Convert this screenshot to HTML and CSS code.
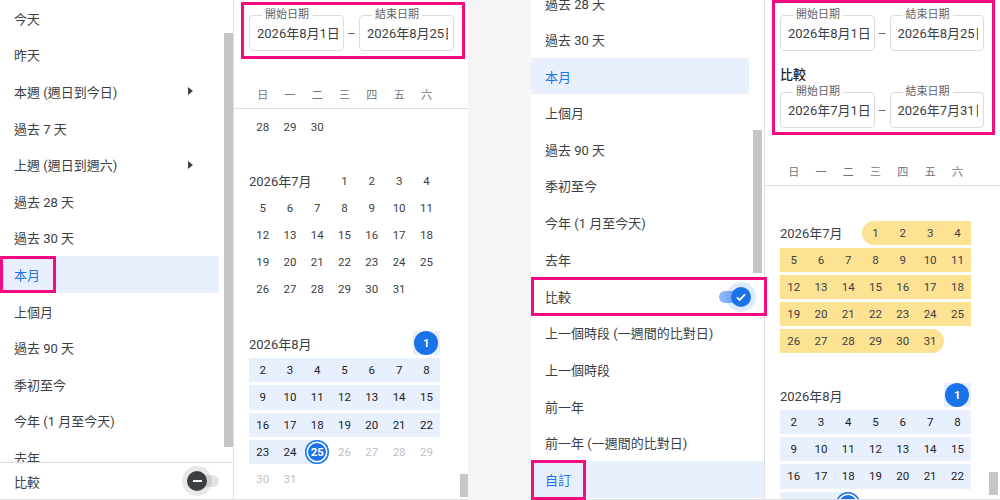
FILE: index.html
```html
<!DOCTYPE html>
<html lang="zh-Hant">
<head>
    <meta charset="UTF-8">
    <meta name="viewport" content="width=device-width, initial-scale=1.0">
    <title>日期範圍</title>
    <link rel="stylesheet" href="styles.css">
</head>
<body>
    <!-- picker without comparison -->
    <div class="shot">
        <div class="menu">
            <div class="menu-scroll">
                <ul class="presets">
                    <li>今天</li>
                    <li>昨天</li>
                    <li>本週 (週日到今日)<i class="caret"></i></li>
                    <li>過去 7 天</li>
                    <li>上週 (週日到週六)<i class="caret"></i></li>
                    <li>過去 28 天</li>
                    <li>過去 30 天</li>
                    <li class="active"><span class="mark mark-item"></span>本月</li>
                    <li>上個月</li>
                    <li>過去 90 天</li>
                    <li>季初至今</li>
                    <li>今年 (1 月至今天)</li>
                    <li>去年</li>
                </ul>
                <div class="vbar"><div class="thumb"></div></div>
            </div>
            <div class="compare-row">比較
                <span class="switch"><span class="track"></span><span class="knob"><i class="minus"></i></span></span>
            </div>
        </div>
        <div class="cal">
            <div class="range">
                <div class="fields">
                    <div class="field"><span class="lbl">開始日期</span><span class="val">2026年8月1日</span></div>
                    <span class="dash">–</span>
                    <div class="field"><span class="lbl">結束日期</span><span class="val">2026年8月25日</span></div>
                </div>
            </div>
            <div class="dow"><span>日</span><span>一</span><span>二</span><span>三</span><span>四</span><span>五</span><span>六</span></div>
            <div class="cal-body">
                <div class="months">
                    <div class="wk"><span>28</span><span>29</span><span>30</span></div>
                    <div class="wk"></div>
                    <div class="wk"><span class="mlabel c3">2026年7月</span><span>1</span><span>2</span><span>3</span><span>4</span></div>
                    <div class="wk"><span>5</span><span>6</span><span>7</span><span>8</span><span>9</span><span>10</span><span>11</span></div>
                    <div class="wk"><span>12</span><span>13</span><span>14</span><span>15</span><span>16</span><span>17</span><span>18</span></div>
                    <div class="wk"><span>19</span><span>20</span><span>21</span><span>22</span><span>23</span><span>24</span><span>25</span></div>
                    <div class="wk"><span>26</span><span>27</span><span>28</span><span>29</span><span>30</span><span>31</span></div>
                    <div class="wk"></div>
                    <div class="wk"><span class="mlabel c6">2026年8月</span><span class="sel"><b class="dot">1</b></span></div>
                    <div class="wk"><span class="sel">2</span><span class="sel">3</span><span class="sel">4</span><span class="sel">5</span><span class="sel">6</span><span class="sel">7</span><span class="sel">8</span></div>
                    <div class="wk"><span class="sel">9</span><span class="sel">10</span><span class="sel">11</span><span class="sel">12</span><span class="sel">13</span><span class="sel">14</span><span class="sel">15</span></div>
                    <div class="wk"><span class="sel">16</span><span class="sel">17</span><span class="sel">18</span><span class="sel">19</span><span class="sel">20</span><span class="sel">21</span><span class="sel">22</span></div>
                    <div class="wk"><span class="sel">23</span><span class="sel">24</span><span class="sel-end"><b class="dot ring">25</b></span><span class="off">26</span><span class="off">27</span><span class="off">28</span><span class="off">29</span></div>
                    <div class="wk"><span class="off">30</span><span class="off">31</span></div>
                </div>
                <div class="vbar"><div class="thumb"></div></div>
            </div>
        </div>
    </div>

    <!-- picker with comparison turned on -->
    <div class="shot shot-cmp">
        <div class="menu">
            <div class="menu-scroll">
                <ul class="presets">
                    <li>過去 28 天</li>
                    <li>過去 30 天</li>
                    <li class="active">本月</li>
                    <li>上個月</li>
                    <li>過去 90 天</li>
                    <li>季初至今</li>
                    <li>今年 (1 月至今天)</li>
                    <li>去年</li>
                </ul>
                <div class="vbar"><div class="thumb"></div></div>
            </div>
            <div class="compare-row"><span class="mark mark-row"></span>比較
                <span class="switch on"><span class="track"></span><span class="knob">
                    <svg width="12" height="12" viewBox="0 0 12 12"><path d="M2 6.3l2.6 2.6L10 3.4" fill="none" stroke="#fff" stroke-width="1.8"/></svg>
                </span></span>
            </div>
            <ul class="options">
                <li>上一個時段 (一週間的比對日)</li>
                <li>上一個時段</li>
                <li>前一年</li>
                <li>前一年 (一週間的比對日)</li>
                <li class="active"><span class="mark mark-item"></span>自訂</li>
            </ul>
        </div>
        <div class="cal">
            <div class="range">
                <div class="fields">
                    <div class="field"><span class="lbl">開始日期</span><span class="val">2026年8月1日</span></div>
                    <span class="dash">–</span>
                    <div class="field"><span class="lbl">結束日期</span><span class="val">2026年8月25日</span></div>
                </div>
                <div class="cmp-label">比較</div>
                <div class="fields">
                    <div class="field"><span class="lbl">開始日期</span><span class="val">2026年7月1日</span></div>
                    <span class="dash">–</span>
                    <div class="field"><span class="lbl">結束日期</span><span class="val">2026年7月31日</span></div>
                </div>
            </div>
            <div class="dow"><span>日</span><span>一</span><span>二</span><span>三</span><span>四</span><span>五</span><span>六</span></div>
            <div class="cal-body">
                <div class="months">
                    <div class="wk"></div>
                    <div class="wk"><span class="mlabel c3">2026年7月</span><span class="cmp cmp-first">1</span><span class="cmp">2</span><span class="cmp">3</span><span class="cmp">4</span></div>
                    <div class="wk"><span class="cmp">5</span><span class="cmp">6</span><span class="cmp">7</span><span class="cmp">8</span><span class="cmp">9</span><span class="cmp">10</span><span class="cmp">11</span></div>
                    <div class="wk"><span class="cmp">12</span><span class="cmp">13</span><span class="cmp">14</span><span class="cmp">15</span><span class="cmp">16</span><span class="cmp">17</span><span class="cmp">18</span></div>
                    <div class="wk"><span class="cmp">19</span><span class="cmp">20</span><span class="cmp">21</span><span class="cmp">22</span><span class="cmp">23</span><span class="cmp">24</span><span class="cmp">25</span></div>
                    <div class="wk"><span class="cmp">26</span><span class="cmp">27</span><span class="cmp">28</span><span class="cmp">29</span><span class="cmp">30</span><span class="cmp cmp-last">31</span></div>
                    <div class="wk"></div>
                    <div class="wk"><span class="mlabel c6">2026年8月</span><span class="sel"><b class="dot">1</b></span></div>
                    <div class="wk"><span class="sel">2</span><span class="sel">3</span><span class="sel">4</span><span class="sel">5</span><span class="sel">6</span><span class="sel">7</span><span class="sel">8</span></div>
                    <div class="wk"><span class="sel">9</span><span class="sel">10</span><span class="sel">11</span><span class="sel">12</span><span class="sel">13</span><span class="sel">14</span><span class="sel">15</span></div>
                    <div class="wk"><span class="sel">16</span><span class="sel">17</span><span class="sel">18</span><span class="sel">19</span><span class="sel">20</span><span class="sel">21</span><span class="sel">22</span></div>
                    <div class="wk"><span class="sel">23</span><span class="sel">24</span><span class="sel-end"><b class="dot ring">25</b></span><span class="off">26</span><span class="off">27</span><span class="off">28</span><span class="off">29</span></div>
                </div>
                <div class="vbar"><div class="thumb"></div></div>
            </div>
        </div>
    </div>
</body>
</html>
```

FILE: styles.css
```css
* { box-sizing: border-box; }
body { margin: 0; height: 500px; overflow: hidden; display: flex; background: #f5f5f5; font-family: Roboto, "Noto Sans CJK TC", sans-serif; color: #3c4043; }
.shot { width: 468px; height: 500px; flex: none; display: flex; background: #fff; border-bottom: 1px solid #e0e0e0; }
.shot-cmp { width: 469px; margin-left: 63px; }

/* preset menu */
.menu { width: 234px; flex: none; display: flex; flex-direction: column; border-right: 1px solid #e0e0e0; font-size: 13px; }
.menu-scroll { flex: 1; min-height: 0; display: flex; overflow: hidden; }
.presets, .options { list-style: none; margin: 0; padding: 0; }
.presets { width: 219px; flex: none; }
.presets li, .options li { position: relative; height: 36.6px; display: flex; align-items: center; justify-content: space-between; padding: 0 26px 0 14px; white-space: nowrap; }
.active { background: #e8f0fe; color: #1a73e8; }
.caret { border-left: 5px solid #3c4043; border-top: 4px solid transparent; border-bottom: 4px solid transparent; }
.menu .vbar { width: 9px; margin-left: 5px; flex: none; }
.menu .thumb { background: #c6c6c6; margin-top: 33px; height: 414px; }
.compare-row { position: relative; flex: none; height: 37px; display: flex; align-items: center; justify-content: space-between; padding: 0 14px; border-top: 1px solid #e0e0e0; }

.shot-cmp .menu-scroll { flex: none; height: 278px; }
.shot-cmp .presets { width: 218px; margin-top: -15.3px; }
.shot-cmp .menu .vbar { margin-left: 4px; }
.shot-cmp .menu .thumb { margin-top: 130px; height: 143px; }
.shot-cmp .compare-row { height: 36.6px; padding-right: 13px; }

/* highlight frames */
.mark { position: absolute; border: 3px solid #f50a82; pointer-events: none; }
.mark-item { left: 0; top: 0; bottom: 0; width: 56px; }
.options .mark-item { top: -1px; bottom: -2px; width: 55px; }
.mark-row { left: 0; right: -3px; top: -2px; bottom: -1px; }

/* switch */
.switch { position: relative; width: 32px; height: 20px; }
.track { position: absolute; left: 3px; right: 0; top: 4px; height: 12px; border-radius: 6px; background: #e3e3e3; }
.knob { position: absolute; left: 0; top: 0; width: 20px; height: 20px; border-radius: 50%; background: #3c4043; box-shadow: 0 0 0 5px rgba(60,64,67,0.12); display: flex; align-items: center; justify-content: center; }
.minus { width: 9px; height: 2px; background: #fff; }
.switch.on .track { left: 0; right: 4px; background: #8ab4f8; }
.switch.on .knob { left: auto; right: 0; background: #1a73e8; box-shadow: 0 0 0 5px rgba(26,115,232,0.14); }

/* calendar */
.cal { flex: 1; min-width: 0; display: flex; flex-direction: column; }
.range { margin: 2px 3px 0 7px; border: 3px solid #f50a82; padding: 10px 8px 5px 5px; }
.shot-cmp .range { margin: 0 5px 0 7px; padding: 12px 8px 4px 5px; }
.fields { display: flex; align-items: center; }
.field { flex: 1; min-width: 0; height: 36px; border: 1px solid #dadce0; border-radius: 4px; padding: 0 5px 0 7px; }
.lbl { display: block; width: fit-content; margin: -7px 0 0 5px; padding: 0 3px; background: #fff; font-size: 11px; line-height: 12px; color: #5f6368; }
.val { display: block; margin-top: 4px; font-size: 13px; line-height: 18px; white-space: nowrap; overflow: hidden; color: #3c4043; }
.dash { width: 15px; flex: none; text-align: center; font-size: 13px; color: #5f6368; }
.cmp-label { margin: 15px 0 8px; font-size: 13px; line-height: 18px; font-weight: 500; color: #202124; }

.dow { display: grid; grid-template-columns: repeat(7, 27.3px); margin-top: 29px; padding: 0 0 4px 15px; border-bottom: 1px solid #e0e0e0; font-size: 11px; line-height: 16px; color: #70757a; }
.shot-cmp .dow { margin-top: 30px; }
.dow span { text-align: center; }

.cal-body { flex: 1; min-height: 0; display: flex; overflow: hidden; }
.months { display: flex; flex-direction: column; flex: none; padding: 4px 0 0 15px; }
.shot-cmp .months { padding-top: 6px; }
.wk { display: grid; grid-template-columns: repeat(7, 27.3px); height: 24.1px; flex: none; margin: 1.5px 0; font-size: 11.5px; }
.wk span { display: flex; align-items: center; justify-content: center; }
.wk .mlabel { justify-content: flex-start; font-size: 13px; }
.c3 { grid-column: span 3; }
.c6 { grid-column: span 6; }
.sel { background: #e8f0fe; color: #202124; }
.sel-end { background: linear-gradient(to right, #e8f0fe 50%, transparent 50%); }
.off { color: #bdc1c6; }
.cmp { background: #fde293; color: #3c4043; }
.cmp-first { border-radius: 12px 0 0 12px; }
.cmp-last { border-radius: 0 12px 12px 0; }
.dot { width: 24px; height: 24px; flex: none; border-radius: 50%; background: #1a73e8; color: #fff; font-weight: 700; display: flex; align-items: center; justify-content: center; }
.ring { box-shadow: inset 0 0 0 1.5px #1a73e8, inset 0 0 0 3px #fff; }

.cal-body .vbar { margin-left: auto; width: 8px; flex: none; display: flex; flex-direction: column; justify-content: flex-end; padding-bottom: 2px; }
.cal-body .thumb { height: 23px; background: #c6c6c6; }
.shot-cmp .cal-body .vbar { width: 9px; margin-right: 2px; padding-bottom: 4px; }
```
